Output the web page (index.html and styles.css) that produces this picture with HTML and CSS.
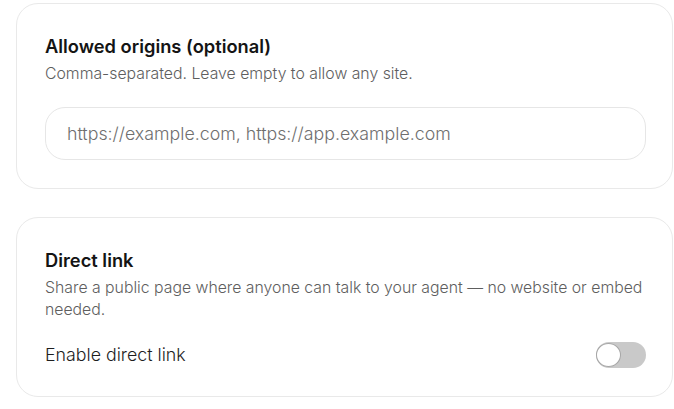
FILE: index.html
```html
<!DOCTYPE html>
<html lang="en">
<head>
<meta charset="utf-8">
<title>Embed settings</title>
<link rel="stylesheet" href="styles.css">
</head>
<body>
  <main class="settings">
    <section class="card">
      <h2 class="card-title">Allowed origins (optional)</h2>
      <p class="card-desc">Comma-separated. Leave empty to allow any site.</p>
      <input class="text-input" type="text" placeholder="https://example.com, https://app.example.com">
    </section>

    <section class="card">
      <h2 class="card-title">Direct link</h2>
      <p class="card-desc">Share a public page where anyone can talk to your agent — no website or embed needed.</p>
      <div class="toggle-row">
        <span class="toggle-label">Enable direct link</span>
        <span class="switch" role="switch" aria-checked="false"><span class="knob"></span></span>
      </div>
    </section>
  </main>
</body>
</html>
```

FILE: styles.css
```css
* { box-sizing: border-box; }

html, body {
  margin: 0;
  background: #ffffff;
}

body {
  font-family: Inter, "Noto Sans", sans-serif;
  color: #1a1a1a;
}

.settings {
  display: flex;
  flex-direction: column;
  gap: 28px;
  padding: 3px 1px 0 16px;
}

.card {
  border: 1px solid #e9e9e9;
  border-radius: 22px;
  padding: 28px 26px 28px 28px;
  background: #fff;
}

.card-title {
  margin: 0;
  font-size: 18.3px;
  line-height: 28px;
  font-weight: 600;
  color: #141414;
}

.card-desc {
  margin: 3px 0 0;
  font-size: 15.8px;
  line-height: 22px;
  font-weight: 300;
  color: #5e5e5e;
}

.text-input {
  display: block;
  width: 100%;
  height: 53px;
  margin-top: 22px;
  padding: 0 21px;
  border: 1px solid #e6e6e6;
  border-radius: 20px;
  font-family: inherit;
  font-size: 17.8px;
  font-weight: 300;
  color: #333;
  background: #fff;
  outline: none;
}

.text-input::placeholder { color: #6f6f6f; }

.toggle-row {
  display: flex;
  align-items: center;
  justify-content: space-between;
  margin-top: 21px;
}

.toggle-label {
  font-size: 17.8px;
  line-height: 26px;
  font-weight: 300;
  color: #1e1e1e;
}

.switch {
  position: relative;
  width: 50px;
  height: 26px;
  border-radius: 13px;
  background: #c9c9c9;
  flex: none;
}

.knob {
  position: absolute;
  top: 1px;
  left: 0;
  width: 25px;
  height: 24px;
  border-radius: 50%;
  background: #fff;
  border: 1.5px solid #a6a6a6;
}
```
